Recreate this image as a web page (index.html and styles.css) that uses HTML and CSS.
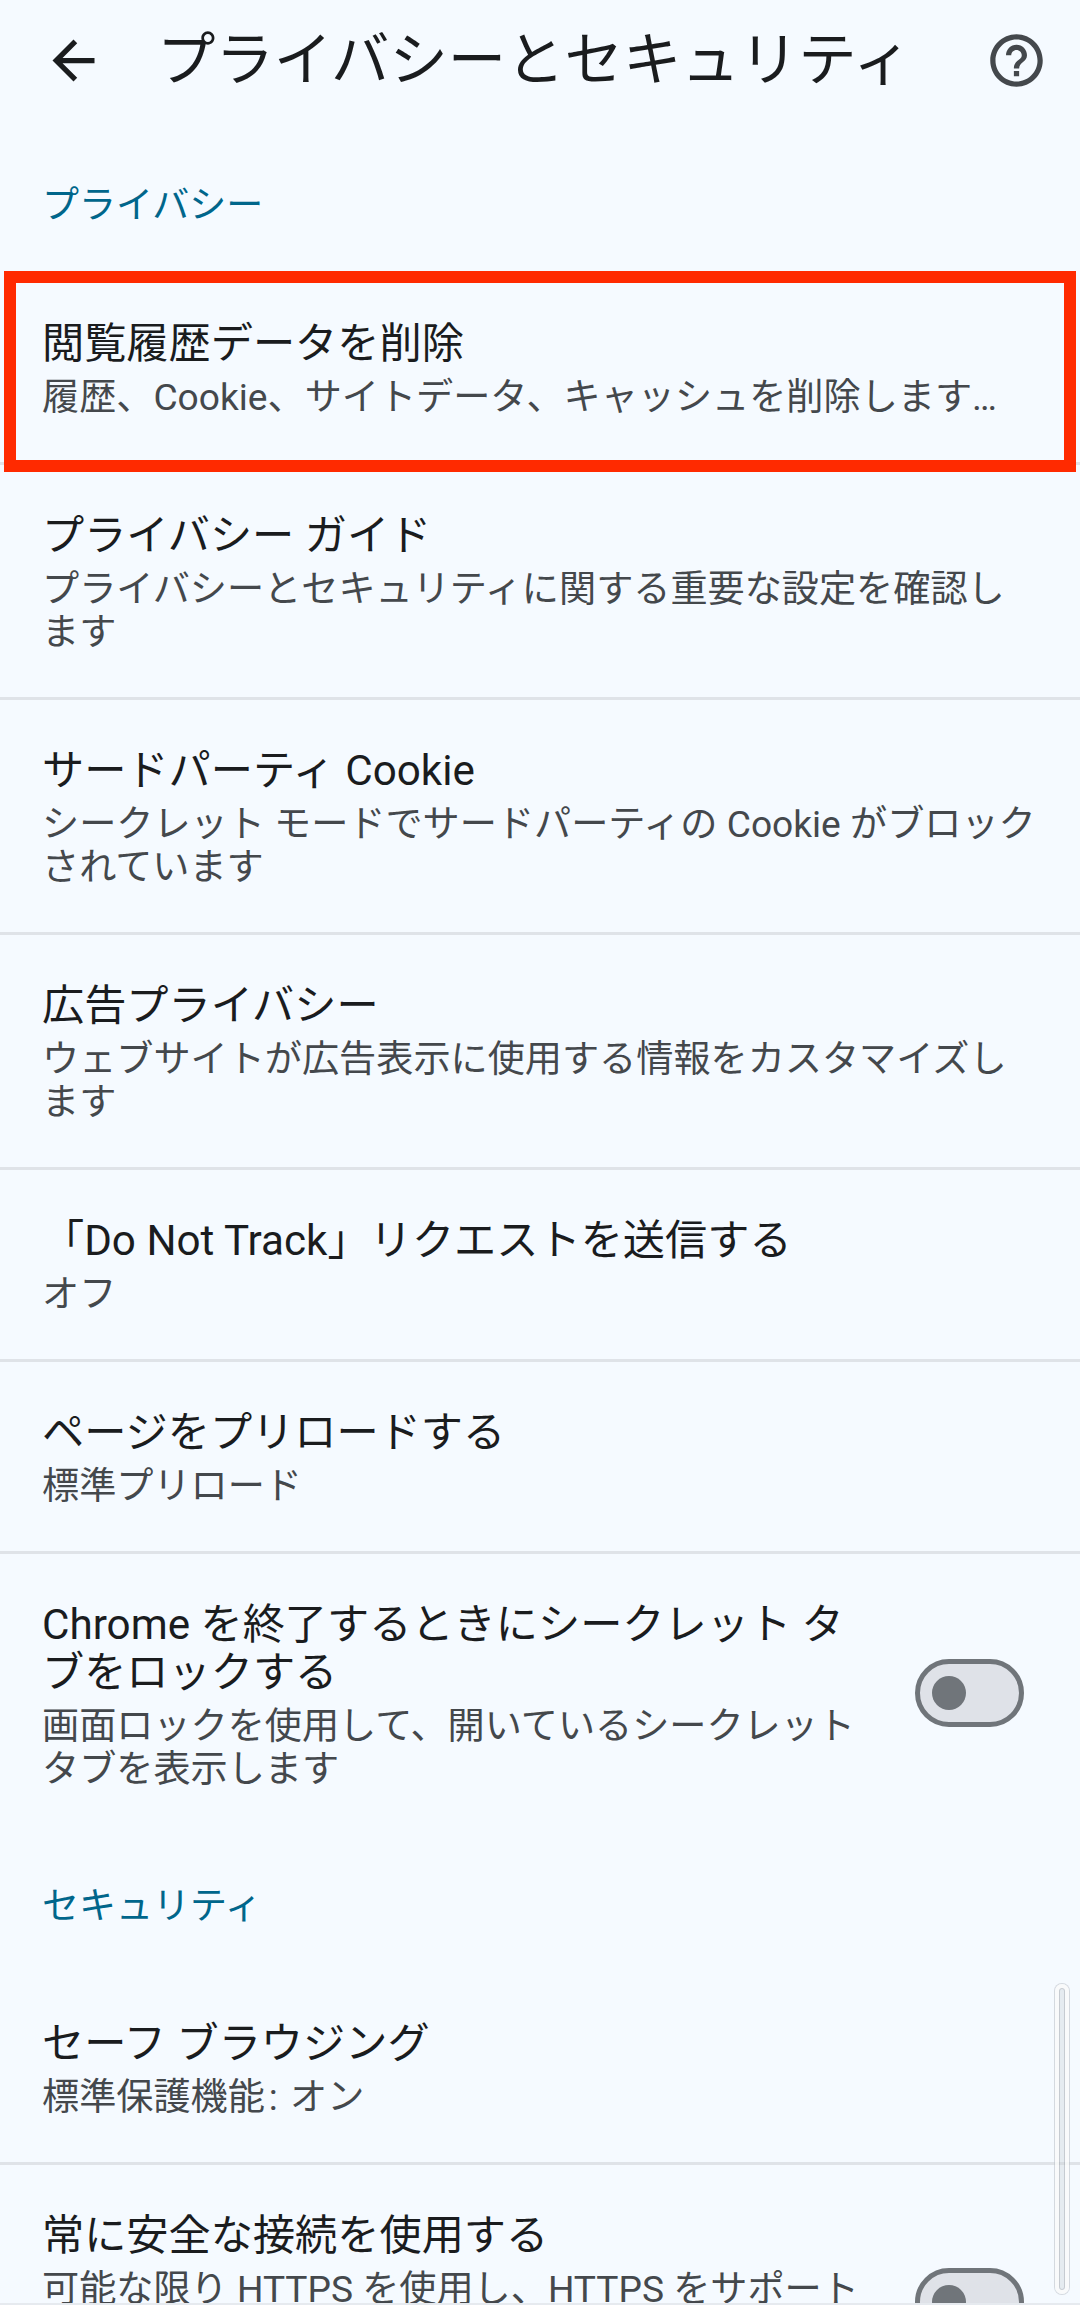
FILE: index.html
```html
<!DOCTYPE html>
<html lang="ja">
<head>
  <meta charset="UTF-8" />
  <meta name="viewport" content="width=device-width, initial-scale=1.0" />
  <title>プライバシーとセキュリティ</title>
  <link rel="stylesheet" href="styles.css">
</head>
<body>

  <header class="toolbar">
    <svg class="icon back-icon" viewBox="0 0 24 24"><path d="M20 11H7.83l5.59-5.59L12 4l-8 8 8 8 1.41-1.41L7.83 13H20v-2z"/></svg>
    <h1>プライバシーとセキュリティ</h1>
    <svg class="icon help-icon" viewBox="0 0 24 24"><path d="M11 18h2v-2h-2v2zm1-16C6.48 2 2 6.48 2 12s4.48 10 10 10 10-4.48 10-10S17.52 2 12 2zm0 18c-4.41 0-8-3.59-8-8s3.59-8 8-8 8 3.59 8 8-3.59 8-8 8zm0-14c-2.21 0-4 1.79-4 4h2c0-1.1.9-2 2-2s2 .9 2 2c0 2-3 1.75-3 5h2c0-2.25 3-2.5 3-5 0-2.21-1.79-4-4-4z"/></svg>
  </header>

  <h2 class="section-title section-first">プライバシー</h2>

  <div class="row">
    <div class="row-title">閲覧履歴データを削除</div>
    <div class="row-sub row-sub-single">履歴、Cookie、サイトデータ、キャッシュを削除します…</div>
  </div>
  <div class="row">
    <div class="row-title">プライバシー ガイド</div>
    <div class="row-sub">プライバシーとセキュリティに関する重要な設定を確認します</div>
  </div>
  <div class="row">
    <div class="row-title">サードパーティ Cookie</div>
    <div class="row-sub">シークレット モードでサードパーティの Cookie がブロックされています</div>
  </div>
  <div class="row">
    <div class="row-title">広告プライバシー</div>
    <div class="row-sub">ウェブサイトが広告表示に使用する情報をカスタマイズします</div>
  </div>
  <div class="row">
    <div class="row-title">「Do Not Track」リクエストを送信する</div>
    <div class="row-sub">オフ</div>
  </div>
  <div class="row">
    <div class="row-title">ページをプリロードする</div>
    <div class="row-sub">標準プリロード</div>
  </div>
  <div class="row row-toggle">
    <div class="row-text">
      <div class="row-title">Chrome を終了するときにシークレット タブをロックする</div>
      <div class="row-sub">画面ロックを使用して、開いているシークレット タブを表示します</div>
    </div>
    <span class="switch"></span>
  </div>

  <h2 class="section-title">セキュリティ</h2>

  <div class="row">
    <div class="row-title">セーフ ブラウジング</div>
    <div class="row-sub">標準保護機能<span class="colon">:</span> オン</div>
  </div>
  <div class="row row-toggle">
    <div class="row-text">
      <div class="row-title">常に安全な接続を使用する</div>
      <div class="row-sub">可能な限り HTTPS を使用し、HTTPS をサポートしていないサイトにアクセスする前に警告を表示します</div>
    </div>
    <span class="switch"></span>
  </div>

  <div class="highlight"></div>
  <div class="scrollbar"></div>
  <div class="nav-edge"></div>

</body>
</html>
```

FILE: styles.css
```css
html, body {
  height: 2305px;
  overflow: hidden;
}

body {
  margin: 0;
  position: relative;
  background-color: #f5faff;
  font-family: Roboto, "Noto Sans CJK JP", sans-serif;
  color: #1a1c1e;
}

.toolbar {
  display: flex;
  align-items: center;
  height: 120px;
  padding: 0 32px 0 42px;
}

.icon {
  width: 63px;
  height: 63px;
  flex: none;
}

.back-icon {
  fill: #1a1c1e;
}

.help-icon {
  fill: #44484c;
}

.toolbar h1 {
  flex: 1;
  margin: 0 0 0 52px;
  font-size: 58.4px;
  font-weight: 400;
  line-height: 70px;
  white-space: nowrap;
}

.section-title {
  margin: 0;
  padding: 58px 42px 49px;
  height: 34px;
  font-size: 37px;
  font-weight: 400;
  line-height: 34px;
  color: #00668b;
}

.section-first {
  padding-top: 69px;
  padding-bottom: 50px;
}

.row {
  padding: 47px 43px 43px 42px;
  border-bottom: 3px solid #dfe3e8;
}

.row-title {
  font-size: 42.2px;
  line-height: 48px;
}

.row-sub {
  margin-top: 8px;
  font-size: 37.15px;
  line-height: 43px;
  color: #44484c;
}

.row-sub-single {
  white-space: nowrap;
  overflow: hidden;
}

.colon {
  margin: 0 3px 0 4px;
}

.row-toggle {
  display: flex;
  align-items: center;
  justify-content: space-between;
  padding-right: 56px;
  padding-bottom: 41px;
  border-bottom: none;
}

.row-text {
  width: 830px;
}

.switch {
  position: relative;
  flex: none;
  width: 109px;
  height: 68px;
  margin-bottom: 6px;
  box-sizing: border-box;
  border: 5px solid #70757a;
  border-radius: 34px;
  background-color: #dfe2e8;
}

.switch::after {
  content: "";
  position: absolute;
  left: 12px;
  top: 12px;
  width: 34px;
  height: 34px;
  border-radius: 50%;
  background-color: #70757a;
}

.highlight {
  position: absolute;
  left: 4px;
  top: 271px;
  width: 1072px;
  height: 201px;
  box-sizing: border-box;
  border: 12px solid #ff2a00;
}

.scrollbar {
  position: absolute;
  left: 1055px;
  top: 1984px;
  width: 14px;
  height: 310px;
  box-sizing: border-box;
  border: 4px solid rgba(255, 255, 255, 0.75);
  border-radius: 7px;
  background-color: rgba(200, 205, 212, 0.35);
  box-shadow: 0 0 0 1px rgba(190, 195, 202, 0.6), inset 0 0 0 1px rgba(150, 155, 162, 0.4);
}

.nav-edge {
  position: absolute;
  left: 0;
  bottom: 0;
  width: 100%;
  height: 2px;
  background-color: #e6eaef;
}
```
